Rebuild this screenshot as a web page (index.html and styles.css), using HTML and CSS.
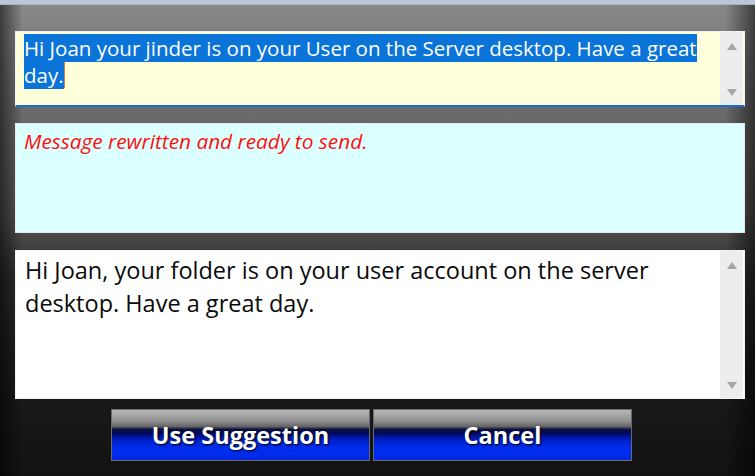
FILE: index.html
```html
<!DOCTYPE html>
<html lang="en">
<head>
<meta charset="UTF-8">
<meta name="viewport" content="width=device-width, initial-scale=1.0">
<title>Rewrite Message</title>
<link rel="stylesheet" href="styles.css">
</head>
<body>

<div class="dialog">
  <div class="titlebar"></div>
  <div class="content">
    <div class="field field-original">
      <div class="field-text"><span class="selected">Hi Joan your jinder is on your User on the Server desktop. Have a great day.</span><span class="caret"></span></div>
      <div class="scrollbar"><span class="arrow arrow-up"></span><span class="arrow arrow-down"></span></div>
    </div>
    <div class="field field-status">
      <p class="status">Message rewritten and ready to send.</p>
    </div>
    <div class="field field-suggestion">
      <div class="field-text">Hi Joan, your folder is on your user account on the server desktop. Have a great day.</div>
      <div class="scrollbar"><span class="arrow arrow-up"></span><span class="arrow arrow-down"></span></div>
    </div>
    <div class="actions">
      <button class="button">Use Suggestion</button>
      <button class="button">Cancel</button>
    </div>
  </div>
</div>

</body>
</html>
```

FILE: styles.css
```css
body {
  margin: 0;
  font-family: "Open Sans", "Noto Sans", sans-serif;
  background: #111;
}
.dialog {
  width: 755px;
  height: 476px;
  overflow: hidden;
  background:
    linear-gradient(to right, rgba(0, 0, 0, 0.55), rgba(0, 0, 0, 0) 3%, rgba(0, 0, 0, 0) 96%, rgba(0, 0, 0, 0.55)),
    linear-gradient(#8a8a8a 0%, #6c6c6c 22%, #555 45%, #2e2e2e 58%, #1a1a1a 80%, #121212 100%);
}
.titlebar {
  height: 4px;
  background: #b9c8d8;
  border-bottom: 1px solid #a8b4c0;
}
.content {
  padding: 26px 10px 0 15px;
}
.field {
  box-sizing: border-box;
  display: flex;
  border: 1px solid #f2f2f2;
}
.field-text {
  flex: 1;
  padding: 3px 8px;
  font-weight: 500;
}
.field-original {
  height: 76px;
  background: #ffffdc;
  border-bottom: 2px solid #1a6cc8;
}
.field-original .field-text {
  font-size: 20.5px;
  line-height: 27px;
  color: #fff;
}
.selected {
  background: #0a74d8;
}
.caret {
  display: inline-block;
  width: 1px;
  height: 26px;
  vertical-align: top;
  background: #e08030;
}
.field-status {
  height: 110px;
  margin-top: 16px;
  background: #dcffff;
  border-color: #e8e8e8;
}
.status {
  margin: 0;
  padding: 3px 8px;
  font-size: 20.8px;
  font-weight: 500;
  font-style: italic;
  color: #ff1010;
}
.field-suggestion {
  height: 149px;
  margin-top: 17px;
  background: #fff;
}
.field-suggestion .field-text {
  padding: 3px 9px;
  font-size: 23.5px;
  line-height: 33px;
  color: #0a0a0a;
}
.scrollbar {
  width: 23px;
  margin-right: 1px;
  display: flex;
  flex-direction: column;
  justify-content: space-between;
  align-items: center;
  padding: 11px 0 9px;
  background: #ededed;
}
.arrow {
  width: 0;
  height: 0;
  border-left: 5px solid transparent;
  border-right: 5px solid transparent;
}
.arrow-up {
  border-bottom: 7px solid #a6a6a6;
}
.arrow-down {
  border-top: 7px solid #a6a6a6;
}
.actions {
  display: flex;
  gap: 3px;
  margin: 10px 0 0 96px;
}
.button {
  width: 259px;
  height: 52px;
  border: 1px solid #6a6a6a;
  font-family: "Open Sans", sans-serif;
  font-size: 23.5px;
  font-weight: bold;
  color: #fff;
  text-shadow: 1px 1px 2px #000;
  background: linear-gradient(#b8b8b8 0%, #909090 22%, #646464 33%, #0a1040 39%, #00085a 46%, #0020c8 60%, #002ef0 78%, #0028e4 100%);
  cursor: pointer;
}
```
